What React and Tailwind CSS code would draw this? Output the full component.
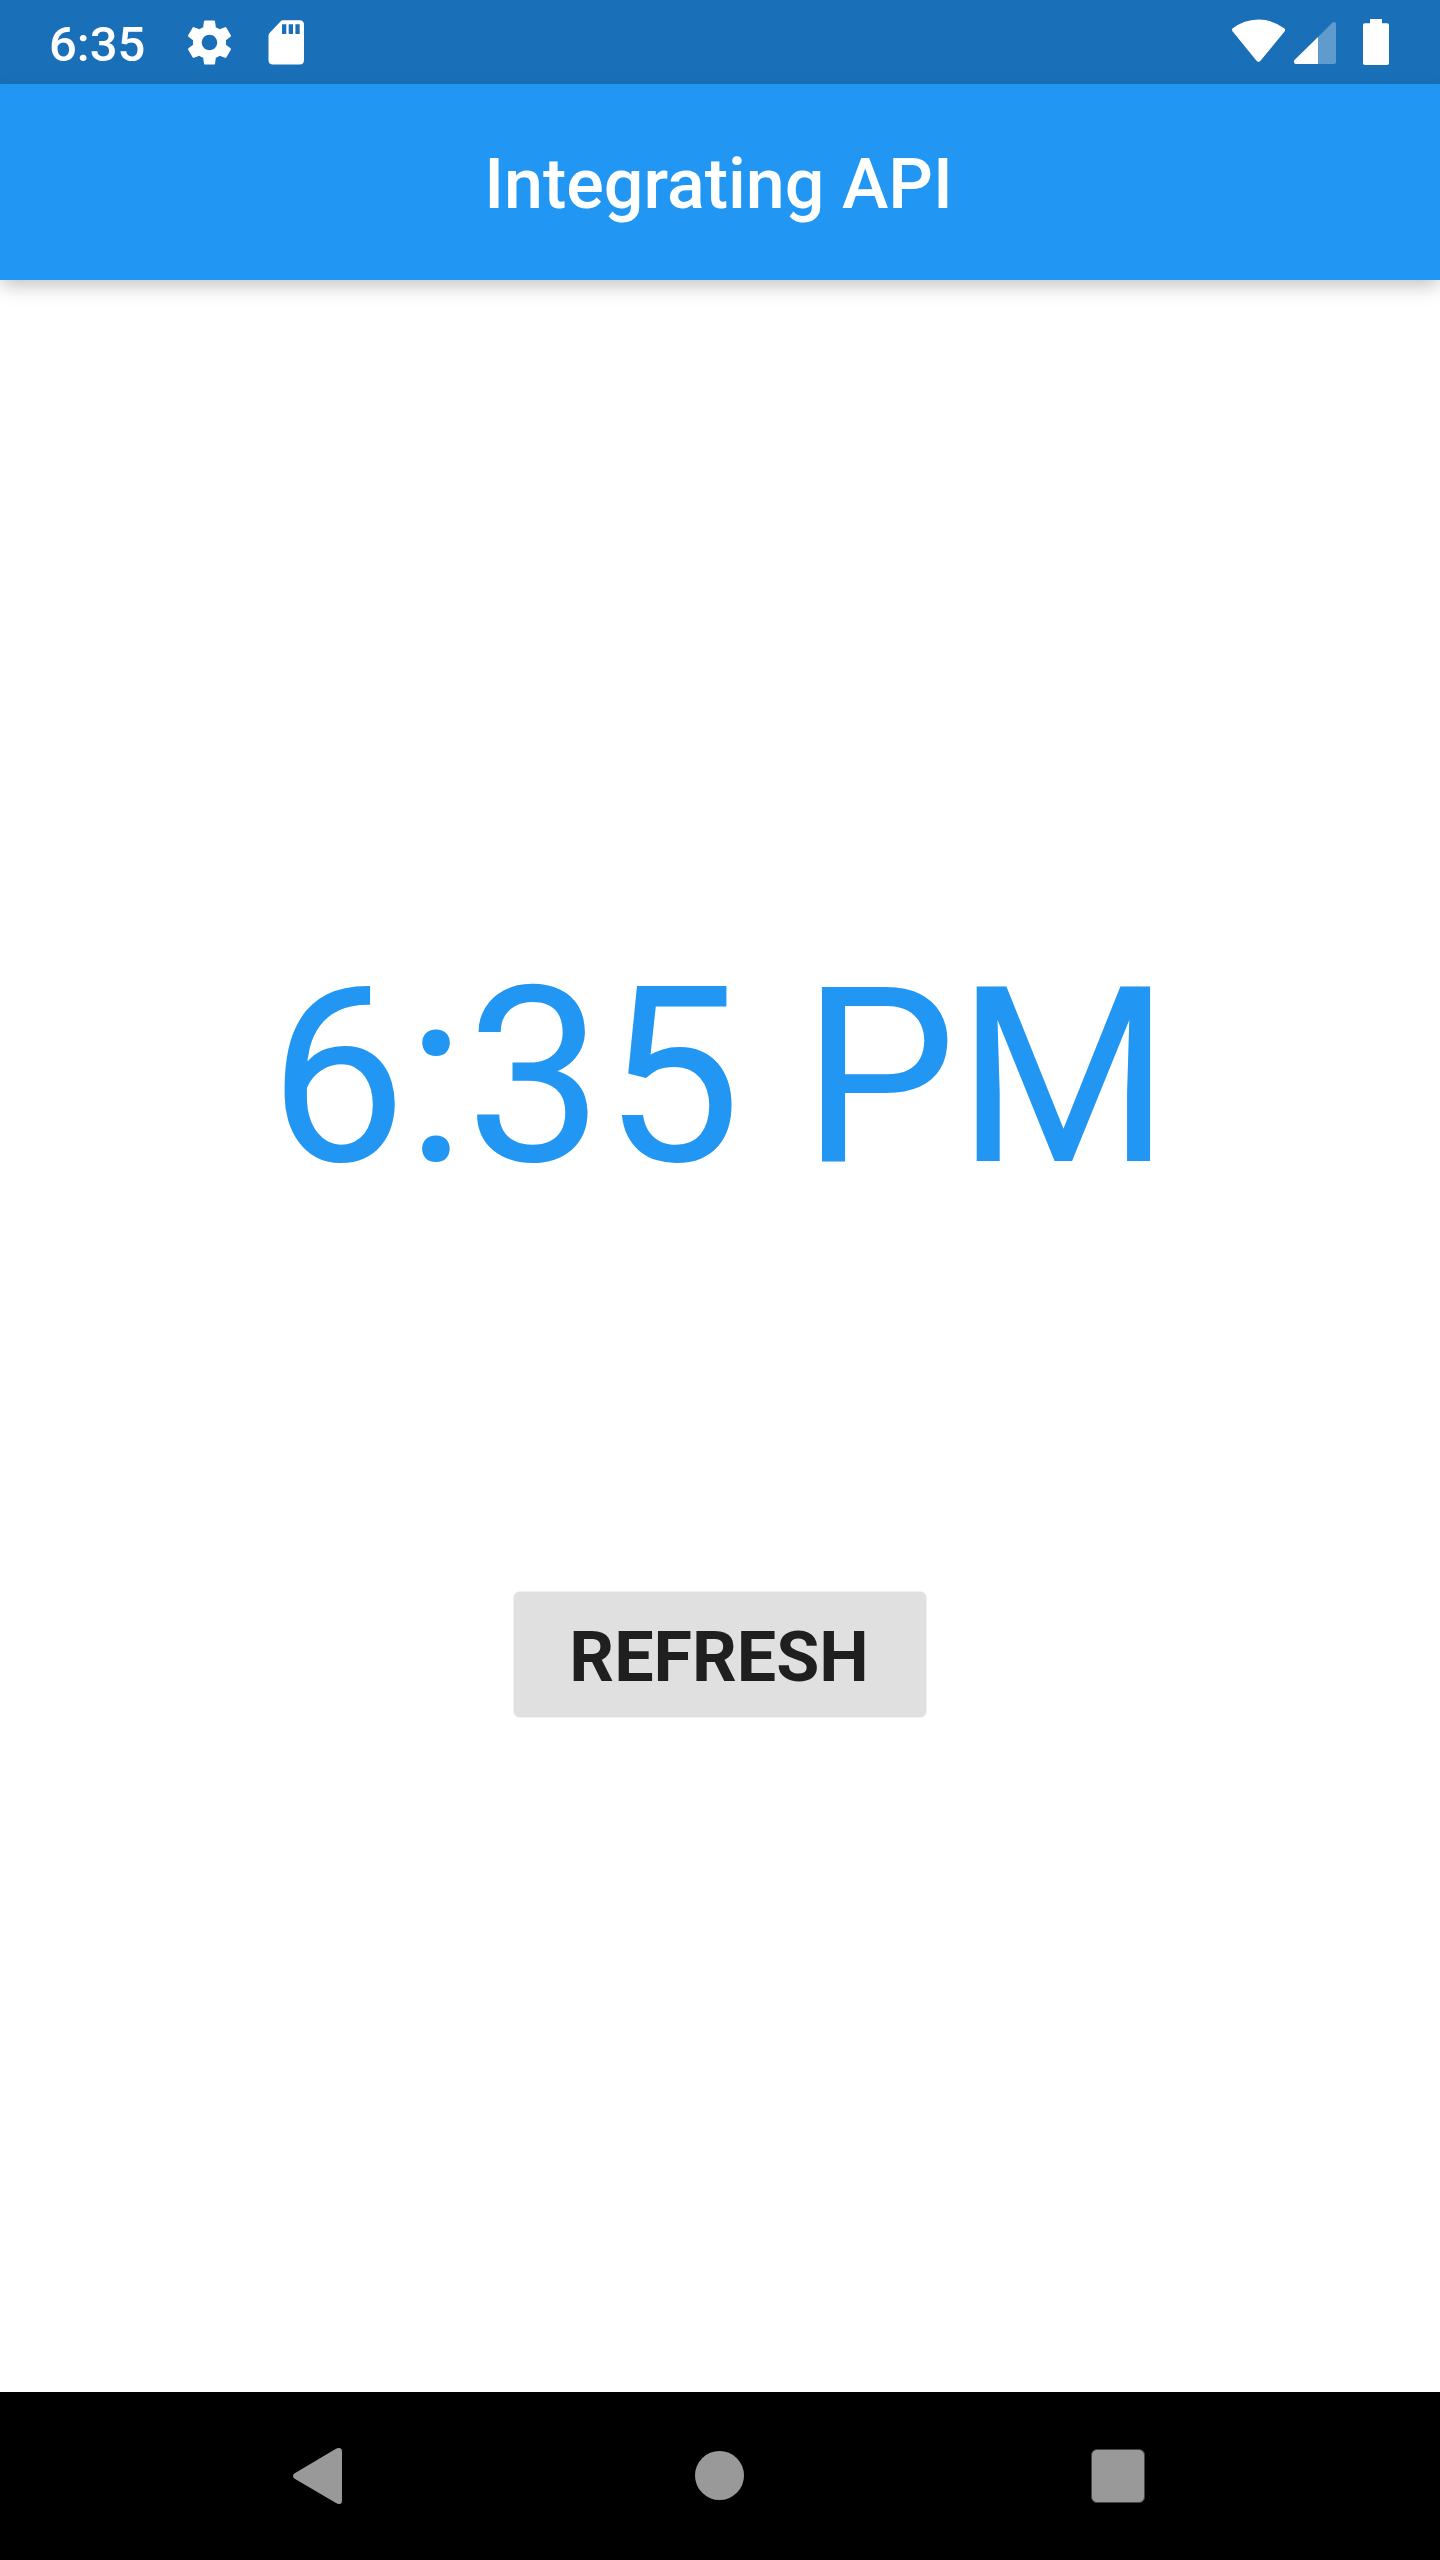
function StatusBar() {
  return (
    <header className="flex h-[84px] items-start justify-between bg-[#1a70b8] text-white">
      <div className="flex">
        <span className="ml-[49px] mt-[5px] w-[99px] text-[49px] font-medium leading-[80px]">6:35</span>
        <svg className="ml-[35px] mt-[16px] size-[53px]" viewBox="0 0 24 24" fill="currentColor">
          <path d="M19.43 12.98c.04-.32.07-.64.07-.98s-.03-.66-.07-.98l2.11-1.65c.19-.15.24-.42.12-.64l-2-3.46c-.12-.22-.39-.3-.61-.22l-2.49 1c-.52-.4-1.08-.73-1.69-.98l-.38-2.65C14.46 2.18 14.25 2 14 2h-4c-.25 0-.46.18-.49.42l-.38 2.65c-.61.25-1.17.59-1.69.98l-2.49-1c-.23-.09-.49 0-.61.22l-2 3.46c-.13.22-.07.49.12.64l2.11 1.65c-.04.32-.07.65-.07.98s.03.66.07.98l-2.11 1.65c-.19.15-.24.42-.12.64l2 3.46c.12.22.39.3.61.22l2.49-1c.52.4 1.08.73 1.69.98l.38 2.65c.03.24.24.42.49.42h4c.25 0 .46-.18.49-.42l.38-2.65c.61-.25 1.17-.59 1.69-.98l2.49 1c.23.09.49 0 .61-.22l2-3.46c.12-.22.07-.49-.12-.64l-2.11-1.65zM12 15.5c-1.93 0-3.5-1.57-3.5-3.5s1.57-3.5 3.5-3.5 3.5 1.57 3.5 3.5-1.57 3.5-3.5 3.5z" />
        </svg>
        <svg className="ml-[32px] mt-[20px] h-[45px] w-[36px]" viewBox="0 0 36 45" fill="currentColor" fillRule="evenodd">
          <path d="M14.5 0.3H31.5Q36 0.3 36 4.8V40Q36 44.5 31.5 44.5H5Q0.5 44.5 0.5 40V15.5Q0.5 14 1.5 13L12.5 1.5Q13.5 0.3 14.5 0.3ZM14 4.3V14H18.3V4.3ZM20.7 4.3V14H25V4.3ZM27.4 4.3V14H31.7V4.3Z" />
        </svg>
      </div>
      <div className="mr-[51px] mt-[19px] flex">
        <svg className="h-[46px] w-[54px]" viewBox="0 0 54 46" fill="currentColor">
          <path d="M0.5 9.5Q12 0.7 26.5 0.5Q41 0.7 52.5 9.5Q53.7 10.8 52.5 12.5L28.5 41.8Q26.5 44 24.5 41.8L0.7 12.5Q-0.7 10.8 0.5 9.5Z" />
        </svg>
        <svg className="ml-[8px] h-[46px] w-[42px]" viewBox="0 0 42 46" fill="currentColor">
          <path opacity="0.3" d="M24 18L38 4Q39.5 2.6 41 3.2Q42 3.6 42 5V43Q42 45 40 45H24Z" />
          <path d="M24 18V45H2Q0 45 0 43V42Q0 41 1 40.5Z" />
        </svg>
        <svg className="ml-[27px] h-[46px] w-[26px]" viewBox="0 0 26 46" fill="currentColor">
          <path d="M7 0H19V4.3H24.2Q26 4.3 26 6.1V44.2Q26 46 24.2 46H1.8Q0 46 0 44.2V6.1Q0 4.3 1.8 4.3H7Z" />
        </svg>
      </div>
    </header>
  );
}

function AppBar() {
  return (
    <div className="z-10 flex h-[196px] items-center justify-center bg-[#2196f3] pr-[3px] pt-[4px] shadow-[0_7px_14px_-3px_rgba(0,0,0,0.12),0_8px_20px_0_rgba(0,0,0,0.12)]">
      <h1 className="text-[70px] font-medium leading-[80px] text-white">Integrating API</h1>
    </div>
  );
}

function NavigationBar() {
  return (
    <nav className="flex h-[168px] bg-black text-[#999999]">
      <svg className="ml-[293px] mt-[55px] h-[58px] w-[50px]" viewBox="0 0 50 58" fill="currentColor">
        <path d="M43 1.7Q45.5 0.3 47.5 1.3Q49 2 49 4.5V53.5Q49 56 47.5 56.7Q45.5 57.5 43 56L1.7 31.7Q0 30.7 0 29Q0 27.3 1.7 26.2Z" />
      </svg>
      <div className="ml-[352px] mt-[59px] size-[49px] rounded-full bg-[#999999]" />
      <div className="ml-[347px] mt-[57px] size-[54px] rounded-[6px] border border-[#444444] bg-[#999999]" />
    </nav>
  );
}

export default function App() {
  return (
    <div className="flex h-[2560px] w-[1440px] flex-col overflow-hidden bg-white font-[Roboto,sans-serif]">
      <StatusBar />
      <AppBar />
      <main className="flex flex-1 flex-col items-center pt-[654px]">
        <p className="whitespace-nowrap pr-px text-[245px] leading-[288px] text-[#2196f3]">6:35 PM</p>
        <button className="mt-[369px] flex h-[127px] w-[414px] items-center justify-center rounded-[7px] border border-[#f0f0f0] bg-[#e0e0e0] pr-[2px] pt-[5px] text-[70px] font-bold leading-[80px] text-[#1f1f1f]">
          REFRESH
        </button>
      </main>
      <NavigationBar />
    </div>
  );
}
